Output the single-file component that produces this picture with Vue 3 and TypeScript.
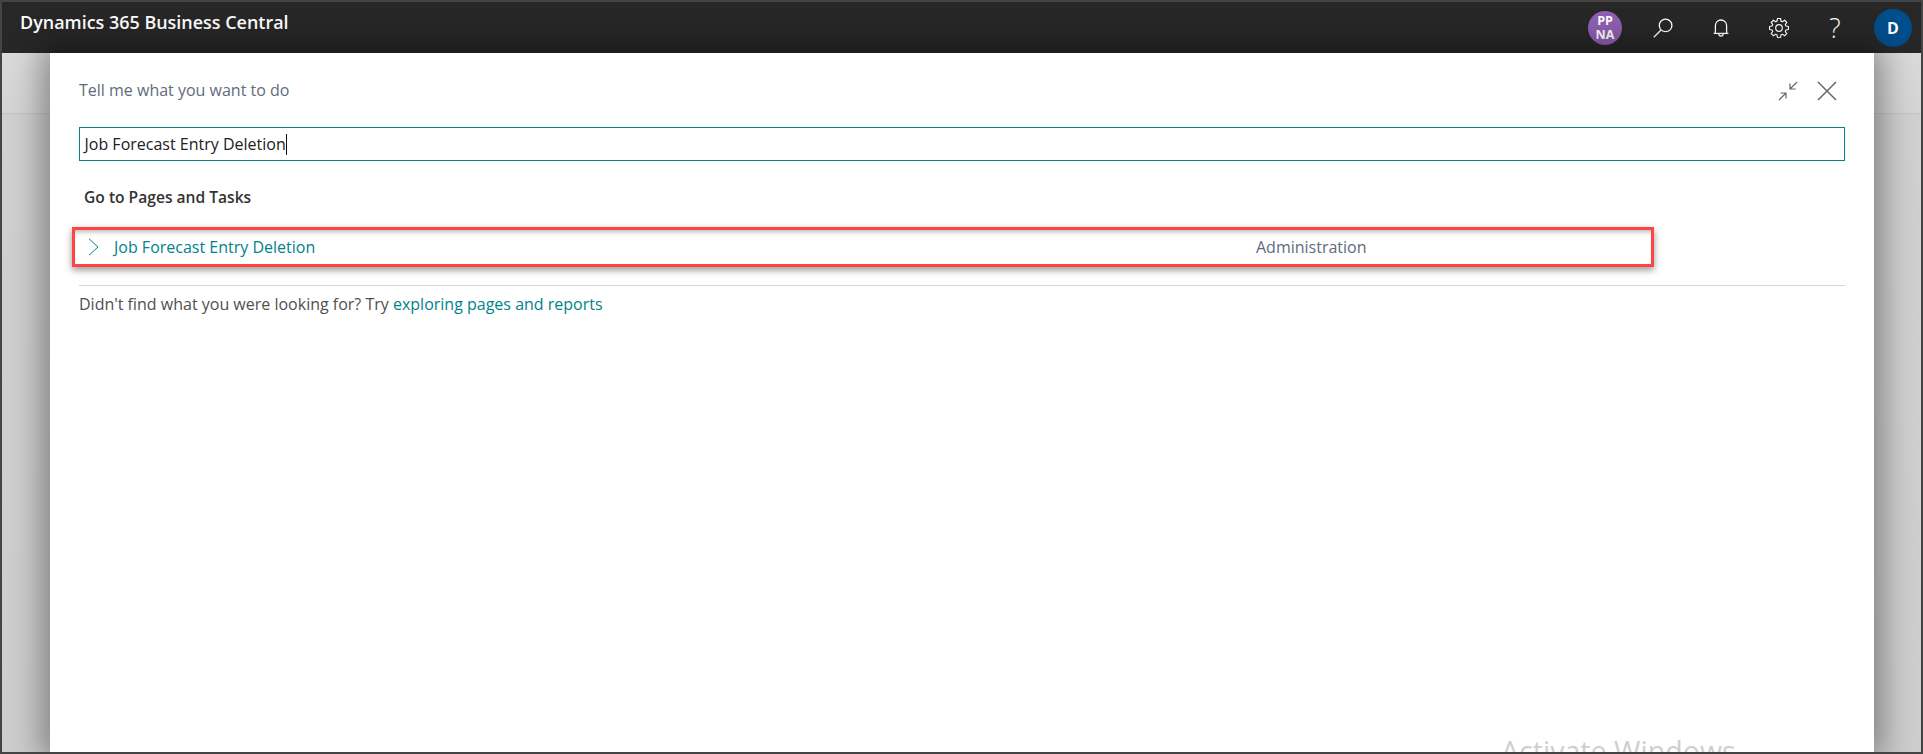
<script setup lang="ts">
function gearPath(cx: number, cy: number, ro: number, ri: number, teeth: number): string {
  const pts: string[] = []
  const step = (Math.PI * 2) / teeth
  for (let i = 0; i < teeth; i++) {
    const a = i * step - Math.PI / 2
    const seq: Array<[number, number]> = [
      [ri, a - step * 0.36],
      [ro, a - step * 0.2],
      [ro, a + step * 0.2],
      [ri, a + step * 0.36],
    ]
    for (const [r, t] of seq) {
      pts.push(`${(cx + r * Math.cos(t)).toFixed(2)} ${(cy + r * Math.sin(t)).toFixed(2)}`)
    }
  }
  return 'M' + pts.join('L') + 'Z'
}
const gear = gearPath(10, 10, 9.6, 7.2, 8)
</script>

<template>
  <div class="frame">
    <header class="topbar">
      <div class="brand">Dynamics 365 Business Central</div>
      <div class="tools">
        <div class="badge"><span>PP</span><span>NA</span></div>
        <svg class="ico search" viewBox="0 0 20 20" width="20" height="20" fill="none" stroke="#fff" stroke-width="1.3">
          <circle cx="12.6" cy="7.4" r="6.3" />
          <path d="M8 12 L0.8 19.2" />
        </svg>
        <svg class="ico bell" viewBox="0 0 16 18" width="16" height="18" fill="none" stroke="#fff" stroke-width="1.3">
          <path d="M2.4 14 V6.6 A5.6 5.6 0 0 1 13.6 6.6 V14" />
          <path d="M0.6 14.4 H15.4" />
          <path d="M5.8 14.8 A2.2 2.2 0 0 0 10.2 14.8" />
        </svg>
        <svg class="ico gear" viewBox="0 0 20 20" width="20" height="20" fill="none" stroke="#fff" stroke-width="1.2" stroke-linejoin="round">
          <path :d="gear" />
          <circle cx="10" cy="10" r="3.3" />
        </svg>
        <div class="help">?</div>
        <div class="avatar">D</div>
      </div>
    </header>

    <main class="backdrop">
      <section class="dialog">
        <div class="dlg-head">
          <div class="dlg-title">Tell me what you want to do</div>
          <div class="dlg-actions">
            <svg viewBox="0 0 20 20" width="20" height="20" fill="none" stroke="#666" stroke-width="1.2">
              <path d="M19 1 L12 8 M12 2.6 V8 H17.6" />
              <path d="M1 19 L8 12 M2.6 12 H8 V17.6" />
            </svg>
            <svg viewBox="0 0 20 20" width="20" height="20" fill="none" stroke="#666" stroke-width="1.5">
              <path d="M1 1 L19 19 M19 1 L1 19" />
            </svg>
          </div>
        </div>

        <div class="search-box"><span>Job Forecast Entry Deletion</span><i class="caret"></i></div>

        <div class="section-title">Go to Pages and Tasks</div>

        <div class="result">
          <svg class="chev" viewBox="0 0 11 18" width="11" height="18" fill="none" stroke="#00838a" stroke-width="1">
            <path d="M1 0.8 L10 9 L1 17.2" />
          </svg>
          <span class="result-name">Job Forecast Entry Deletion</span>
          <span class="result-dept">Administration</span>
        </div>

        <div class="rule"></div>

        <div class="hint">Didn't find what you were looking for? Try <span class="link">exploring pages and reports</span></div>

        <div class="watermark">Activate Windows</div>
      </section>
    </main>
  </div>
</template>

<style>
html, body {
  margin: 0;
  background: #c9c9c9;
}
</style>

<style scoped>
.frame {
  box-sizing: border-box;
  width: 1923px;
  height: 754px;
  border: 2px solid #444;
  display: flex;
  flex-direction: column;
  overflow: hidden;
  font-family: "Open Sans", "Noto Sans", sans-serif;
}
.topbar {
  flex: 0 0 51px;
  background: #272727;
  display: flex;
  align-items: center;
  justify-content: space-between;
  padding: 0 9px 0 18px;
  color: #fff;
}
.brand {
  font-size: 17.95px;
  font-weight: 600;
  margin-bottom: 11px;
}
.tools {
  display: flex;
  align-items: center;
}
.badge {
  width: 34px;
  height: 34px;
  border-radius: 50%;
  background: #8f5fb2;
  display: flex;
  flex-direction: column;
  align-items: center;
  justify-content: center;
  font-size: 12.5px;
  font-weight: 700;
  line-height: 13.5px;
  margin-right: 31px;
}
.ico {
  display: block;
}
.search {
  margin-right: 40px;
}
.bell {
  margin-right: 40px;
}
.gear {
  margin-right: 36px;
}
.help {
  width: 20px;
  text-align: center;
  font-size: 27px;
  font-weight: 300;
  line-height: 30px;
  margin-right: 29px;
}
.avatar {
  width: 38px;
  height: 38px;
  border-radius: 50%;
  background: #004e8c;
  display: flex;
  align-items: center;
  justify-content: center;
  font-size: 16px;
  font-weight: 700;
}
.backdrop {
  flex: 1;
  min-height: 0;
  padding: 0 47px 0 48px;
  background:
    linear-gradient(#dadada, #d4d4d4 60px, #bcbcbc 60px, #d0d0d0 61px, #cdcdcd);
}
.dialog {
  position: relative;
  height: 100%;
  background: #fff;
  box-shadow: 0 0 30px 8px rgba(0, 0, 0, 0.38);
  padding: 0 29px;
  overflow: hidden;
}
.dlg-head {
  display: flex;
  align-items: center;
  justify-content: space-between;
  height: 74px;
  box-sizing: border-box;
}
.dlg-title {
  font-size: 16px;
  color: #616b7c;
}
.dlg-actions {
  display: flex;
  align-items: center;
  gap: 19px;
  margin-right: 8px;
  margin-top: 1px;
}
.search-box {
  box-sizing: border-box;
  height: 34px;
  border: 1.4px solid #00838a;
  display: flex;
  align-items: center;
  padding-left: 4.5px;
  font-size: 16px;
  color: #212121;
}
.caret {
  display: block;
  width: 1px;
  height: 21px;
  background: #111;
  margin-left: 0.5px;
}
.section-title {
  margin: 24px 0 18px 5px;
  font-size: 15.6px;
  font-weight: 600;
  line-height: 24px;
  color: #333;
}
.result {
  box-sizing: border-box;
  width: 1582px;
  height: 40px;
  margin-left: -7px;
  border: 3px solid #ff4444;
  box-shadow: 0 3px 7px rgba(0, 0, 0, 0.42), inset 0 5px 5px -3px rgba(0, 0, 0, 0.28);
  display: flex;
  align-items: center;
  padding-left: 13px;
  font-size: 16px;
}
.chev {
  flex: none;
  margin-right: 15px;
}
.result-name {
  flex: none;
  width: 1142px;
  color: #00838a;
}
.result-dept {
  color: #616b7c;
}
.rule {
  height: 1px;
  background: #d6d6d6;
  margin-top: 18px;
}
.hint {
  margin-top: 6px;
  line-height: 24px;
  font-size: 16px;
  color: #505050;
}
.link {
  color: #00838a;
}
.watermark {
  position: absolute;
  left: 1451px;
  top: 678px;
  font-size: 28.6px;
  line-height: 40px;
  color: #cfcfcf;
  white-space: nowrap;
}
</style>
